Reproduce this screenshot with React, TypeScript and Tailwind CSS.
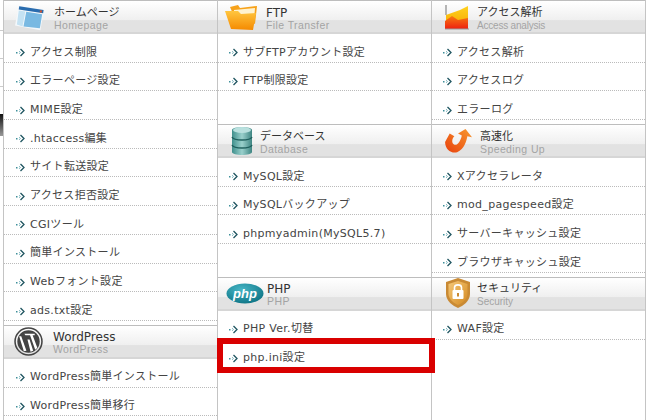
const FONT = "font-['DejaVu_Sans','Noto_Sans_CJK_JP',sans-serif]";

function Arrow() {
  return (
    <svg width="10" height="9" viewBox="0 0 10 9" className="shrink-0">
      <rect x="0" y="4" width="1.5" height="1.5" fill="#3f8f9a" />
      <path d="M4.5 1 L8 4.5 L4.5 8" fill="none" stroke="#1f5560" strokeWidth="1.3" />
      <path d="M3 3.2 L4.5 4.5 L3 5.8" fill="none" stroke="#7fb8c0" strokeWidth="1" />
    </svg>
  );
}

function HomepageIcon() {
  return (
    <svg width="30" height="28" viewBox="0 0 32 28">
      <path d="M4 2 L31 6 L27 28 L0 23 Z" fill="#f4f8fb" />
      <path d="M4.5 2.5 L30.5 6.5 L30 10 L4 6 Z" fill="#2a6cae" />
      <path d="M4 7 L11 8 L8 24 L2 22 Z" fill="#c4e2f3" />
      <path d="M12 8.5 L29 11 L26.5 26 L9 24 Z" fill="#79b9e2" />
      <rect x="26.5" y="7" width="2.2" height="2.2" fill="#d8522a" />
    </svg>
  );
}

function FolderIcon() {
  return (
    <svg width="34" height="26" viewBox="0 0 34 26">
      <defs>
        <linearGradient id="fold" x1="0" y1="0" x2="0" y2="1">
          <stop offset="0" stopColor="#ffc640" />
          <stop offset="1" stopColor="#f58a00" />
        </linearGradient>
      </defs>
      <path d="M5 3 L13 1 L15 4 L32 2 L30 20 L8 10 Z" fill="#f7a21a" />
      <path d="M9 6 L30 4 L29 16 L9 10 Z" fill="#fff3d0" />
      <path d="M0 7 L13 7 L16 10 L31 9 L28 26 L6 25 Z" fill="url(#fold)" />
    </svg>
  );
}

function ChartIcon() {
  return (
    <svg width="26" height="28" viewBox="0 0 26 28">
      <defs>
        <linearGradient id="chart" x1="0" y1="0" x2="0" y2="1">
          <stop offset="0" stopColor="#ffd21f" />
          <stop offset="1" stopColor="#f5a800" />
        </linearGradient>
        <linearGradient id="chart2" x1="0" y1="0" x2="0" y2="1">
          <stop offset="0" stopColor="#f77a10" />
          <stop offset="1" stopColor="#ee1f10" />
        </linearGradient>
      </defs>
      <rect x="1" y="2" width="2" height="10" fill="#b5b5b5" />
      <path d="M2 12 L16 7 L24 3 L24 24 L2 24 Z" fill="url(#chart)" />
      <path d="M1 18 L8 13 L14 17 L24 15 L24 26 L1 26 Z" fill="url(#chart2)" />
      <path d="M1 26 L25 26" stroke="#999" strokeWidth="1" />
    </svg>
  );
}

function DatabaseIcon() {
  return (
    <svg width="22" height="30" viewBox="0 0 22 30">
      <defs>
        <linearGradient id="db" x1="0" y1="0" x2="1" y2="0">
          <stop offset="0" stopColor="#3f8f8c" />
          <stop offset="0.5" stopColor="#9ad0cc" />
          <stop offset="1" stopColor="#3e8582" />
        </linearGradient>
      </defs>
      <path d="M1 4 C1 0 21 0 21 4 L21 26 C21 30 1 30 1 26 Z" fill="url(#db)" />
      <ellipse cx="11" cy="4" rx="9" ry="3" fill="#b9e0de" />
      <path d="M1 11 C3 15 19 15 21 11 M1 19 C3 23 19 23 21 19" fill="none" stroke="#1f5f5d" strokeWidth="1.5" />
    </svg>
  );
}

function SpeedIcon() {
  return (
    <svg width="28" height="26" viewBox="0 0 30 28">
      <defs>
        <linearGradient id="speed" x1="0" y1="1" x2="1" y2="0">
          <stop offset="0" stopColor="#e8400c" />
          <stop offset="1" stopColor="#f89a30" />
        </linearGradient>
      </defs>
      <path d="M5 6 L0 15 C0 23 7 28 13 26 C21 23 23 14 24 9 L29 10 L22 1 L14 6 L18 8 C17 13 14 19 10 18 C7 17 7 12 10 9 Z" fill="url(#speed)" />
    </svg>
  );
}

function ShieldIcon() {
  return (
    <svg width="26" height="30" viewBox="0 0 26 30">
      <defs>
        <linearGradient id="shield" x1="0" y1="0" x2="1" y2="1">
          <stop offset="0" stopColor="#f5c878" />
          <stop offset="1" stopColor="#d48a22" />
        </linearGradient>
      </defs>
      <path d="M13 0 L25 4 L25 16 C25 23 18 28 13 30 C8 28 1 23 1 16 L1 4 Z" fill="#c98a34" />
      <path d="M13 3 L22.5 6 L22.5 16 C22.5 21 17 25.5 13 27 C9 25.5 3.5 21 3.5 16 L3.5 6 Z" fill="url(#shield)" />
      <rect x="7.5" y="12" width="11" height="9" rx="1" fill="#fff" />
      <path d="M9.5 12 L9.5 9.5 C9.5 6 16.5 6 16.5 9.5 L16.5 12" fill="none" stroke="#fff" strokeWidth="1.6" />
      <rect x="12" y="15" width="2" height="3.5" fill="#c98a34" />
    </svg>
  );
}

function WordPressIcon() {
  return (
    <svg width="29" height="29" viewBox="0 0 28 28">
      <circle cx="14" cy="14" r="13" fill="none" stroke="#444" strokeWidth="1.5" />
      <circle cx="14" cy="14" r="10.8" fill="#444" />
      <path d="M5 9 L7 9 L12 23 L9.5 23.5 Z M10 6.5 L20 6.5 L20 8 L18 8 L22.5 20 L20.5 22 L15.5 8 L11 8 Z M13 12 L15 12 L18.5 23 L16 24 Z" fill="#fff" />
    </svg>
  );
}

function PhpIcon() {
  return (
    <svg width="38" height="21" viewBox="0 0 38 21">
      <defs>
        <radialGradient id="php" cx="0.4" cy="0.3" r="0.8">
          <stop offset="0" stopColor="#45b5c5" />
          <stop offset="1" stopColor="#0a6f80" />
        </radialGradient>
      </defs>
      <ellipse cx="19" cy="10.5" rx="18.5" ry="10" fill="url(#php)" />
      <text x="19" y="15" textAnchor="middle" fontSize="13" fontStyle="italic" fontWeight="700" fill="#fff" fontFamily="Liberation Sans, sans-serif">php</text>
    </svg>
  );
}

function Header({
  icon,
  title,
  sub,
  iconBox,
  titleClass = 'text-[11px]',
  subClass = 'text-[10.5px] tracking-[0.4px]',
}: {
  icon: React.ReactNode;
  title: string;
  sub: string;
  iconBox: string;
  titleClass?: string;
  subClass?: string;
}) {
  return (
    <div className="flex h-[33px] items-center border-b-2 border-[#d6d6d6] bg-[linear-gradient(to_bottom,#fff_0%,#efefef_62%,#e2e2e2_63%,#e2e2e2_100%)]">
      <div className={`flex shrink-0 items-center justify-center ${iconBox}`}>{icon}</div>
      <div className="flex flex-col pt-[3px]">
        <span className={`leading-[14px] text-[#333] ${titleClass}`}>{title}</span>
        <span className={`font-['Liberation_Sans',sans-serif] leading-[11px] text-[#a4a4a4] ${subClass}`}>{sub}</span>
      </div>
    </div>
  );
}

function Row({ label, pad }: { label?: string; pad: string }) {
  if (!label) return <div className="h-[28.7px]" />;
  return (
    <div className={`flex h-[28.7px] items-center gap-[4px] border-b border-dotted border-[#bbb] pt-[10px] ${pad}`}>
      <Arrow />
      <span className="text-[11px] tracking-[0.3px] whitespace-nowrap text-[#444]">{label}</span>
    </div>
  );
}

function Section({ header, items, pad, className = '' }: { header: React.ReactNode; items: string[]; pad: string; className?: string }) {
  return (
    <section className={`border-t border-[#bdbdbd] ${className}`}>
      {header}
      {items.map((item, i) => (
        <Row key={i} label={item} pad={pad} />
      ))}
    </section>
  );
}

export default function App() {
  return (
    <div className={`relative h-[420px] w-[648px] overflow-hidden bg-white ${FONT}`}>
      {/* bits of the page behind, showing left of the panel */}
      <div className="absolute left-0 top-[30px] h-px w-[3px] bg-[#ccc]" />
      <div className="absolute left-0 top-[58px] h-px w-[3px] bg-[#ccc]" />
      <div className="absolute left-0 top-[86px] h-px w-[3px] bg-[#ccc]" />
      <div className="absolute left-0 top-[114px] h-[22px] w-[3px] bg-[linear-gradient(to_bottom,#111,#999)]" />

      <div className="flex h-full w-[646px] pl-[3px]">
        {/* left */}
        <div className="w-[215px] shrink-0 border-x border-[#c4c4c4]">
          <Section
            pad="pl-[12px]"
            header={<Header icon={<HomepageIcon />} title="ホームページ" sub="Homepage" iconBox="w-[50px] pl-[2px]" />}
            items={['アクセス制限', 'エラーページ設定', 'MIME設定', '.htaccess編集', 'サイト転送設定', 'アクセス拒否設定', 'CGIツール', '簡単インストール', 'Webフォント設定', 'ads.txt設定']}
          />
          <Section
            className="mt-[4px]"
            pad="pl-[12px]"
            header={<Header icon={<WordPressIcon />} title="WordPress" sub="WordPress" iconBox="w-[49px]" titleClass="text-[12px]" />}
            items={['WordPress簡単インストール', 'WordPress簡単移行']}
          />
        </div>
        {/* middle */}
        <div className="w-[214px] shrink-0 border-r border-[#c4c4c4]">
          <Section
            pad="pl-[11px]"
            header={<Header icon={<FolderIcon />} title="FTP" sub="File Transfer" iconBox="w-[48px]" titleClass="text-[12px]" />}
            items={['サブFTPアカウント設定', 'FTP制限設定', '']}
          />
          <Section
            className="mt-[4px]"
            pad="pl-[11px]"
            header={<Header icon={<DatabaseIcon />} title="データベース" sub="Database" iconBox="w-[42px] pl-[5px]" />}
            items={['MySQL設定', 'MySQLバックアップ', 'phpmyadmin(MySQL5.7)', '']}
          />
          <Section
            className="mt-[4px]"
            pad="pl-[11px]"
            header={<Header icon={<PhpIcon />} title="PHP" sub="PHP" iconBox="w-[49px] pl-[5px]" titleClass="text-[12px]" />}
            items={['PHP Ver.切替', 'php.ini設定']}
          />
        </div>
        {/* right */}
        <div className="w-[214px] shrink-0 border-r border-[#c4c4c4]">
          <Section
            pad="pl-[11px]"
            header={<Header icon={<ChartIcon />} title="アクセス解析" sub="Access analysis" iconBox="w-[45px] pl-[5px]" subClass="text-[10px] tracking-[-0.2px]" />}
            items={['アクセス解析', 'アクセスログ', 'エラーログ']}
          />
          <Section
            className="mt-[4px]"
            pad="pl-[11px]"
            header={<Header icon={<SpeedIcon />} title="高速化" sub="Speeding Up" iconBox="w-[48px] pl-[6px]" />}
            items={['Xアクセラレータ', 'mod_pagespeed設定', 'サーバーキャッシュ設定', 'ブラウザキャッシュ設定']}
          />
          <Section
            className="mt-[4px]"
            pad="pl-[11px]"
            header={<Header icon={<ShieldIcon />} title="セキュリティ" sub="Security" iconBox="w-[45px] pl-[7px]" subClass="text-[10px]" />}
            items={['WAF設定']}
          />
        </div>
      </div>
      {/* red highlight over php.ini row */}
      <div className="absolute left-[217px] top-[338px] h-[35px] w-[218px] border-[6px] border-[#d90000]" />
    </div>
  );
}
